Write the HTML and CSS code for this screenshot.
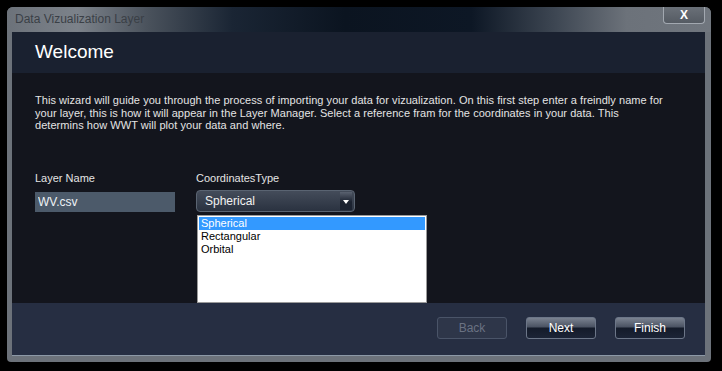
FILE: index.html
```html
<!DOCTYPE html>
<html lang="en">
<head>
    <meta charset="UTF-8">
    <title>Data Vizualization Layer</title>
    <link rel="stylesheet" href="styles.css">
</head>
<body>
    <div class="window">
        <div class="titlebar">
            <span class="title">Data Vizualization Layer</span>
            <button class="close-btn">X</button>
        </div>

        <div class="panel">
            <div class="header">
                <h1>Welcome</h1>
            </div>

            <div class="content">
                <p class="intro">
                    This wizard will guide you through the process of importing your data for vizualization. On this first step enter a freindly name for<br>
                    your layer, this is how it will appear in the Layer Manager. Select a reference fram for the coordinates in your data. This<br>
                    determins how WWT will plot your data and where.
                </p>

                <div class="fields">
                    <div class="field field-name">
                        <label for="layerName">Layer Name</label>
                        <input type="text" id="layerName" value="WV.csv">
                    </div>
                    <div class="field field-coords">
                        <label>CoordinatesType</label>
                        <div class="combo">
                            <span class="combo-text">Spherical</span>
                            <span class="combo-arrow"></span>
                        </div>
                        <!-- open dropdown list -->
                        <ul class="combo-list">
                            <li class="selected">Spherical</li>
                            <li>Rectangular</li>
                            <li>Orbital</li>
                        </ul>
                    </div>
                </div>
            </div>

            <div class="footer">
                <button class="wiz-btn" disabled>Back</button>
                <button class="wiz-btn">Next</button>
                <button class="wiz-btn">Finish</button>
            </div>
        </div>
    </div>
</body>
</html>
```

FILE: styles.css
```css
body {
    margin: 0;
    background-color: #000;
    font-family: "Liberation Sans", Arial, sans-serif;
}

.window {
    margin: 7px 0 0 7px;
    width: 704px;
    height: 355px;
    background-color: #6c727a;
    border-radius: 6px 6px 4px 4px;
    display: flex;
    flex-direction: column;
    overflow: hidden;
}

.titlebar {
    height: 25px;
    display: flex;
    justify-content: space-between;
    align-items: flex-start;
    background: linear-gradient(90deg, #6c727a 0%, #7c828a 10%, #4a525c 20%, #1a2534 32%, #0b1420 48%, #0d1725 66%, #3e4753 78%, #6c727a 88%, #70767e 100%);
}

.title {
    margin: 5px 0 0 8px;
    font-size: 12px;
    color: #3a3f46;
}

.close-btn {
    margin-right: 6px;
    width: 42px;
    height: 17px;
    padding: 0;
    border: 1px solid #a2a8b0;
    border-top: none;
    border-radius: 0 0 4px 4px;
    background: linear-gradient(#6a7078, #555b63);
    color: #fff;
    font-family: "Liberation Sans", Arial, sans-serif;
    font-weight: bold;
    font-size: 12px;
}

.panel {
    flex: 1;
    margin: 0 6px 6px 5px;
    display: flex;
    flex-direction: column;
    border-bottom: 1px solid #8c98a6;
}

.header {
    height: 41px;
    background-color: #1a2130;
    padding: 10px 0 0 23px;
    box-sizing: border-box;
}

.header h1 {
    margin: 0;
    font-size: 19px;
    font-weight: normal;
    line-height: 20px;
    color: #fff;
}

.content {
    flex: 1;
    background-color: #13151d;
    padding: 21px 0 0 23px;
    color: #e4e4e4;
    font-size: 11px;
}

.intro {
    margin: 0;
    line-height: 12.5px;
    letter-spacing: 0.05px;
}

.fields {
    display: flex;
    margin-top: 40px;
}

.field {
    display: flex;
    flex-direction: column;
}

.field label {
    line-height: 13px;
    font-size: 11px;
    color: #e4e4e4;
}

.field-name {
    width: 161px;
}

.field-name label {
    margin-bottom: 7px;
}

.field-name input {
    width: 140px;
    height: 20px;
    box-sizing: border-box;
    margin: 0;
    padding: 0 3px;
    border: none;
    background-color: #4c5a6a;
    color: #eef2f6;
    font-family: "Liberation Sans", Arial, sans-serif;
    font-size: 12px;
}

.field-coords {
    position: relative;
}

.field-coords label {
    margin-bottom: 5px;
}

.combo {
    width: 159px;
    height: 22px;
    box-sizing: border-box;
    border: 1px solid #5a6472;
    border-radius: 4px;
    background: linear-gradient(#444c5a, #2a3240);
    display: flex;
    align-items: center;
    justify-content: space-between;
    padding: 0 2px 0 8px;
}

.combo-text {
    color: #f2f2f2;
    font-size: 12px;
}

.combo-arrow {
    width: 12px;
    height: 18px;
    background: linear-gradient(#5a6270, #1b2230 55%);
    position: relative;
}

.combo-arrow::after {
    content: "";
    position: absolute;
    left: 3px;
    top: 8px;
    border-left: 3px solid transparent;
    border-right: 3px solid transparent;
    border-top: 4px solid #fff;
}

.combo-list {
    position: absolute;
    left: 1px;
    top: 43px;
    width: 230px;
    height: 88px;
    box-sizing: border-box;
    margin: 0;
    padding: 1px;
    list-style: none;
    background-color: #fff;
    border: 1px solid #9a9a9a;
    color: #000;
    font-size: 11px;
    line-height: 13px;
}

.combo-list li {
    padding-left: 2px;
}

.combo-list li.selected {
    background-color: #3399ff;
    color: #fff;
}

.footer {
    height: 52px;
    background-color: #262e42;
    display: flex;
    justify-content: flex-end;
    align-items: flex-start;
    gap: 19px;
    padding: 14px 20px 0 0;
    box-sizing: border-box;
}

.wiz-btn {
    width: 70px;
    height: 22px;
    padding: 0;
    border: 1px solid #6c7688;
    border-radius: 3px;
    background: linear-gradient(#7a8290, #4a5262 45%, #141b2a 50%, #1c2436);
    color: #fff;
    font-family: "Liberation Sans", Arial, sans-serif;
    font-size: 12px;
}

.wiz-btn:disabled {
    background: #2e3649;
    border-color: #4a5468;
    color: #6a7283;
}
```
